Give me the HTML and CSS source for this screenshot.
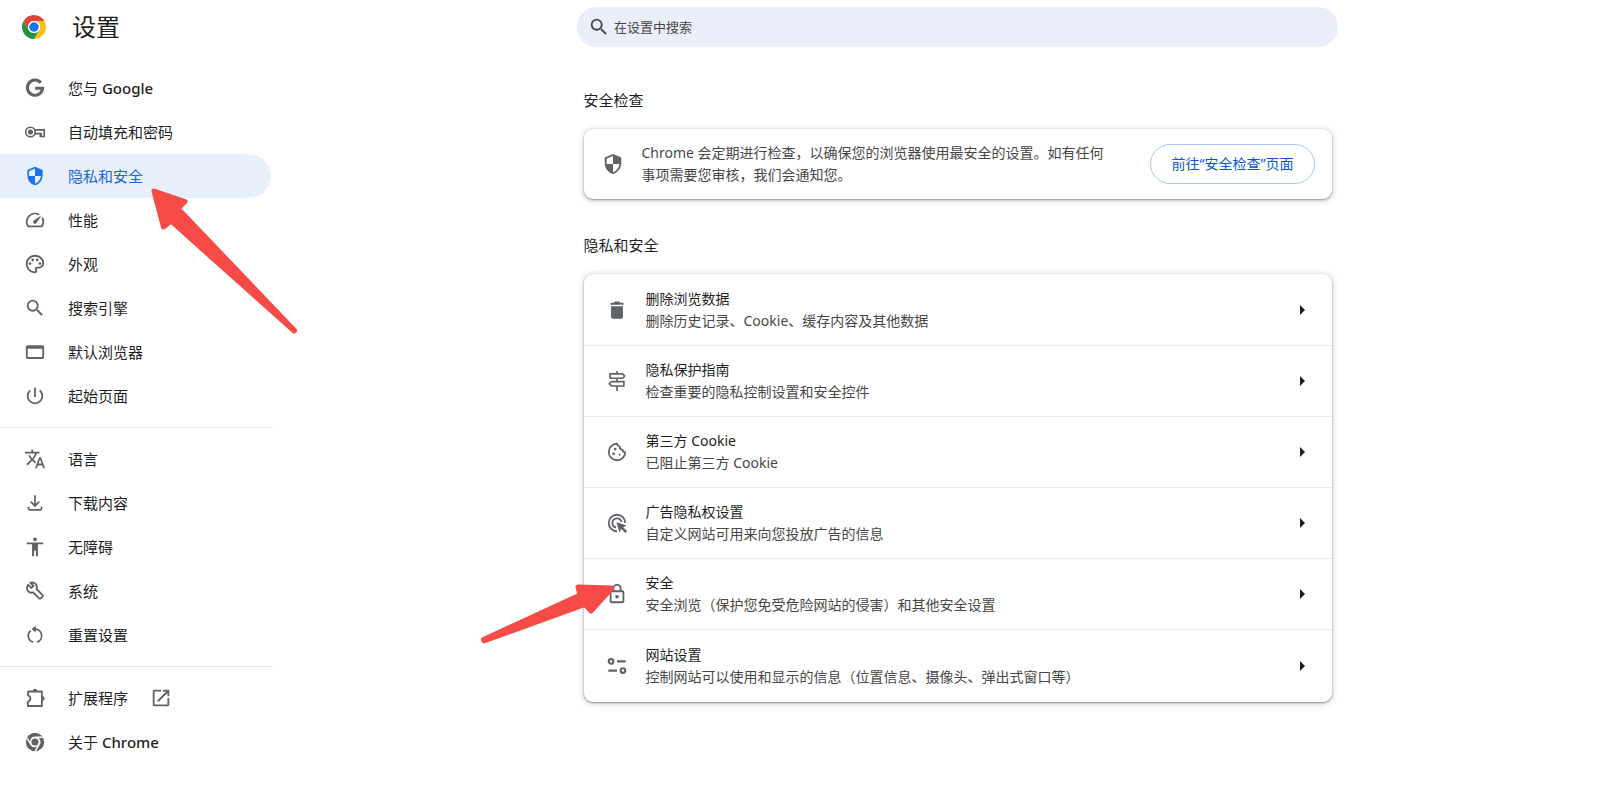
FILE: index.html
```html
<!DOCTYPE html>
<html lang="zh-CN">
<head>
<meta charset="utf-8">
<meta name="viewport" content="width=device-width, initial-scale=1">
<title>设置</title>
<link rel="stylesheet" href="styles.css">
</head>
<body>
<div class="page">
  <aside class="sidebar">
    <div class="brand">
      <svg class="brand-logo" viewBox="0 0 48 48" aria-hidden="true">
        <path fill="#db4437" d="M3.22 12A24 24 0 0 1 44.78 12H24A12 12 0 0 0 13.61 30Z"/>
        <path fill="#fbc116" d="M44.78 12A24 24 0 0 1 24 48L34.39 30A12 12 0 0 0 24 12Z"/>
        <path fill="#229342" d="M24 48A24 24 0 0 1 3.22 12L13.61 30A12 12 0 0 0 34.39 30Z"/>
        <circle cx="24" cy="24" r="12" fill="#fff"/>
        <circle cx="24" cy="24" r="9.5" fill="#1a73e8"/>
      </svg>
      <h1 class="brand-title">设置</h1>
    </div>
    <nav class="menu" aria-label="设置">
      <a class="menu-item" href="#people">
        <svg class="icon" viewBox="0 0 24 24" fill="none" stroke="currentColor" stroke-width="3.4"><path d="M18.3 6.2A8.3 8.3 0 1 0 20.3 12.2H12.2"/></svg>
        <span>您与 <span class="latin">Google</span></span>
      </a>
      <a class="menu-item" href="#autofill">
        <svg class="icon" viewBox="0 0 24 24" fill="none" stroke="currentColor" stroke-width="1.8"><circle cx="7" cy="12" r="5.2"/><circle cx="7" cy="12" r="2.8" fill="currentColor" stroke="none"/><path d="M11.6 9.7H22v7.2h-4.2v-3.2H12"/><path d="M18.8 13.2v3"/></svg>
        <span>自动填充和密码</span>
      </a>
      <a class="menu-item menu-item-active" href="#privacy" aria-current="page">
        <svg class="icon" viewBox="-1 -1 26 26"><path d="M12 1L3 5v6c0 5.55 3.84 10.74 9 12 5.16-1.26 9-6.45 9-12V5l-9-4zm0 10.99h7c-.53 4.12-3.28 7.79-7 8.94V12H5V6.3l7-3.11v8.8z"/></svg>
        <span>隐私和安全</span>
      </a>
      <a class="menu-item" href="#performance">
        <svg class="icon" viewBox="0 0 24 24"><path d="M20.38 8.57l-1.23 1.85a8 8 0 0 1-.22 7.58H5.07A8 8 0 0 1 15.58 6.85l1.85-1.23A10 10 0 0 0 3.35 19a2 2 0 0 0 1.72 1h13.85a2 2 0 0 0 1.74-1 10 10 0 0 0-.27-10.44zM10.59 15.41a2 2 0 0 0 2.83 0l5.66-8.49-8.49 5.66a2 2 0 0 0 0 2.83z"/></svg>
        <span>性能</span>
      </a>
      <a class="menu-item" href="#appearance">
        <svg class="icon" viewBox="0 0 24 24"><path d="M12 22C6.49 22 2 17.51 2 12S6.49 2 12 2s10 4.04 10 9c0 3.31-2.69 6-6 6h-1.77c-.28 0-.5.22-.5.5 0 .12.05.23.13.33.41.47.64 1.06.64 1.67A2.5 2.5 0 0 1 12 22zm0-18c-4.41 0-8 3.59-8 8s3.59 8 8 8c.28 0 .5-.22.5-.5a.54.54 0 0 0-.14-.35c-.41-.46-.63-1.05-.63-1.65a2.5 2.5 0 0 1 2.5-2.5H16c2.21 0 4-1.79 4-4 0-3.86-3.59-7-8-7z"/><circle cx="6.5" cy="11.5" r="1.5"/><circle cx="9.5" cy="7.5" r="1.5"/><circle cx="14.5" cy="7.5" r="1.5"/><circle cx="17.5" cy="11.5" r="1.5"/></svg>
        <span>外观</span>
      </a>
      <a class="menu-item" href="#search">
        <svg class="icon" viewBox="0 0 24 24"><path d="M15.5 14h-.79l-.28-.27A6.471 6.471 0 0 0 16 9.5 6.5 6.5 0 1 0 9.5 16c1.61 0 3.09-.59 4.23-1.57l.27.28v.79l5 4.99L20.49 19l-4.99-5zm-6 0C7.01 14 5 11.99 5 9.5S7.01 5 9.5 5 14 7.01 14 9.5 11.99 14 9.5 14z"/></svg>
        <span>搜索引擎</span>
      </a>
      <a class="menu-item" href="#default-browser">
        <svg class="icon" viewBox="0 0 24 24"><path d="M4 4.5h16a2 2 0 0 1 2 2v11a2 2 0 0 1-2 2H4a2 2 0 0 1-2-2v-11a2 2 0 0 1 2-2zM4 8.5v9h16v-9z" fill-rule="evenodd"/></svg>
        <span>默认浏览器</span>
      </a>
      <a class="menu-item" href="#on-startup">
        <svg class="icon" viewBox="0 0 24 24"><path d="M13 3h-2v10h2V3zm4.83 2.17l-1.42 1.42A6.92 6.92 0 0 1 19 12c0 3.87-3.13 7-7 7s-7-3.13-7-7c0-2.19 1.01-4.14 2.58-5.42L6.17 5.17A8.93 8.93 0 0 0 3 12a9 9 0 0 0 18 0c0-2.74-1.23-5.18-3.17-6.83z"/></svg>
        <span>起始页面</span>
      </a>
      <hr class="menu-line">
      <a class="menu-item" href="#languages">
        <svg class="icon" viewBox="0 0 24 24"><path d="M12.87 15.07l-2.54-2.51.03-.03c1.74-1.94 2.98-4.17 3.71-6.53H17V4h-7V2H8v2H1v1.99h11.17C11.5 7.92 10.44 9.75 9 11.35 8.07 10.32 7.3 9.19 6.69 8h-2c.73 1.63 1.73 3.17 2.98 4.56l-5.09 5.02L4 19l5-5 3.11 3.11.76-2.04zM18.5 10h-2L12 22h2l1.12-3h4.75L21 22h2l-4.5-12zm-2.62 7l1.62-4.33L19.12 17h-3.24z"/></svg>
        <span>语言</span>
      </a>
      <a class="menu-item" href="#downloads">
        <svg class="icon" viewBox="0 0 24 24" fill="none" stroke="currentColor" stroke-width="1.9"><path d="M12 3.500v11.500M7.400 10.600L12 15.200l4.600-4.600M4.900 16v2.200q0 1.400 1.400 1.400h11.400q1.400 0 1.400-1.400V16"/></svg>
        <span>下载内容</span>
      </a>
      <a class="menu-item" href="#accessibility">
        <svg class="icon" viewBox="0 0 24 24"><path d="M12 1.500a2.100 2.100 0 1 1 0 4.200 2.100 2.100 0 0 1 0-4.200zM21 9h-5.800v13.200h-2.200V16h-2v6.200H8.800V9H3V7h18z"/></svg>
        <span>无障碍</span>
      </a>
      <a class="menu-item" href="#system">
        <svg class="icon" viewBox="0 0 24 24" fill="none" stroke="currentColor" stroke-width="2" stroke-linejoin="round"><path d="M4.500 5.300l3.400 3.400 2.400-2.200-3.400-3.400c2-.8 4.200-.2 5.600 1.200 1.500 1.500 1.900 3.600 1.200 5.500l6.500 6.600c.5.500.5 1.200 0 1.700l-1.900 1.900c-.5.500-1.200.5-1.700 0l-6.600-6.500c-1.900.7-3.900.300-5.300-1.100-1.700-1.700-2.100-4.200-.2-7.100z"/></svg>
        <span>系统</span>
      </a>
      <a class="menu-item" href="#reset">
        <svg class="icon" viewBox="0 0 24 24" fill="none" stroke="currentColor" stroke-width="1.900"><path d="M11 5.500h1.500a7.300 7.300 0 0 1 1.800 14.200M10 19.800A7.300 7.300 0 0 1 7.300 7.200"/><path d="M12.800 1.800v7.400L8.200 5.500z" fill="currentColor" stroke="none"/></svg>
        <span>重置设置</span>
      </a>
      <hr class="menu-line">
      <a class="menu-item" href="#extensions">
        <svg class="icon" viewBox="0 0 24 24"><path d="M4.500 4.900H19.500V20.700H4.200v-4.500q2.800-1.200 2.800-3.600T4.200 9z" fill="none" stroke="currentColor" stroke-width="2" stroke-linejoin="round"/><path d="M9.500 4.500a2.500 2.500 0 0 1 5 0zM20 10a2.500 2.500 0 0 1 0 5z"/></svg>
        <span>扩展程序</span>
        <svg class="icon" viewBox="0 0 24 24"><path d="M19 19H5V5h7V3H5a2 2 0 0 0-2 2v14a2 2 0 0 0 2 2h14c1.100 0 2-.9 2-2v-7h-2v7zM14 3v2h3.590l-9.830 9.830 1.410 1.410L19 6.410V10h2V3h-7z"/></svg>
      </a>
      <a class="menu-item" href="#about">
        <svg class="icon" viewBox="-3 -3 54 54"><circle cx="24" cy="24" r="22.500"/><path d="M43 12.500H24A11.500 11.500 0 0 0 14 18.200M4.500 14.500L14 30A11.500 11.500 0 0 0 24 35.500M24.500 46.500L34 30A11.500 11.500 0 0 0 30 14" fill="none" stroke="#fff" stroke-width="3.600"/><circle cx="24" cy="24" r="10.500" fill="currentColor" stroke="#fff" stroke-width="3.600"/></svg>
        <span>关于 <span class="latin">Chrome</span></span>
      </a>
    </nav>
    <svg class="pointer pointer-menu" viewBox="0 0 150 150" aria-hidden="true"><path d="M5 5L36 15.500 29 22.500 145.500 144.500 145 145 22 35 14.500 41Z"/></svg>
  </aside>

  <main class="main">
    <label class="search">
      <svg class="icon search-icon" viewBox="0 0 24 24"><path d="M15.500 14h-.79l-.28-.27A6.471 6.471 0 0 0 16 9.500 6.500 6.500 0 1 0 9.500 16c1.610 0 3.090-.59 4.230-1.570l.27.28v.79l5 4.990L20.490 19l-4.990-5zm-6 0C7.010 14 5 11.990 5 9.500S7.010 5 9.500 5 14 7.010 14 9.500 11.990 14 9.500 14z"/></svg>
      <input class="search-input" type="search" placeholder="在设置中搜索" aria-label="在设置中搜索">
    </label>

    <section class="section">
      <h2 class="section-title">安全检查</h2>
      <div class="card check">
        <svg class="icon" viewBox="0 0 24 24"><path d="M12 1L3 5v6c0 5.550 3.840 10.740 9 12 5.160-1.260 9-6.450 9-12V5l-9-4zm0 10.990h7c-.53 4.120-3.280 7.790-7 8.940V12H5V6.300l7-3.110v8.800z"/></svg>
        <p class="check-text">Chrome 会定期进行检查，以确保您的浏览器使用最安全的设置。如有任何事项需要您审核，我们会通知您。</p>
        <button class="check-button" type="button">前往“安全检查”页面</button>
      </div>
    </section>

    <section class="section">
      <h2 class="section-title">隐私和安全</h2>
      <div class="card list">
        <a class="row" href="#clear">
          <svg class="icon" viewBox="0 0 24 24"><path d="M5.500 8h13v11.500a2 2 0 0 1-2 2h-9a2 2 0 0 1-2-2z"/><path d="M15.500 4l-1-1.300h-5L8.500 4H5v2.200h14V4z"/></svg>
          <span class="row-text"><span class="row-title">删除浏览数据</span><span class="row-sub">删除历史记录、Cookie、缓存内容及其他数据</span></span>
          <svg class="arrow" viewBox="0 0 5 10"><path d="M0 0l5 5-5 5z"/></svg>
        </a>
        <a class="row" href="#guide">
          <svg class="icon" viewBox="0 0 24 24" fill="none" stroke="currentColor" stroke-width="1.800"><path d="M12 1v3M12 9v3.500M12 17.500v5.500M4.500 4.200h13.500l2.400 2.400L18 9H4.500zM19.500 12.600H6l-2.400 2.400L6 17.400h13.500z"/></svg>
          <span class="row-text"><span class="row-title">隐私保护指南</span><span class="row-sub">检查重要的隐私控制设置和安全控件</span></span>
          <svg class="arrow" viewBox="0 0 5 10"><path d="M0 0l5 5-5 5z"/></svg>
        </a>
        <a class="row" href="#cookies">
          <svg class="icon" viewBox="0 0 24 24"><path d="M12 3A9 9 0 1 0 21 12.500q-2.600 0-3-3-3-.2-3-3.300Q12.500 5.500 12 3z" fill="none" stroke="currentColor" stroke-width="2" stroke-linejoin="round"/><circle cx="10" cy="8.800" r="1.500"/><circle cx="8.200" cy="14" r="1.500"/><circle cx="14.800" cy="15" r="1.100"/></svg>
          <span class="row-text"><span class="row-title">第三方 Cookie</span><span class="row-sub">已阻止第三方 Cookie</span></span>
          <svg class="arrow" viewBox="0 0 5 10"><path d="M0 0l5 5-5 5z"/></svg>
        </a>
        <a class="row" href="#ads">
          <svg class="icon" viewBox="0 0 24 24"><path d="M12 21a9 9 0 1 1 9-9M11 16.900A5 5 0 1 1 16.900 11" fill="none" stroke="currentColor" stroke-width="2"/><path d="M11.300 11.300l11.200 3.500-3.800 1.700 4.400 4.400-2 2-4.400-4.400-1.900 3.900z"/></svg>
          <span class="row-text"><span class="row-title">广告隐私权设置</span><span class="row-sub">自定义网站可用来向您投放广告的信息</span></span>
          <svg class="arrow" viewBox="0 0 5 10"><path d="M0 0l5 5-5 5z"/></svg>
        </a>
        <a class="row" href="#security">
          <svg class="icon" viewBox="0 0 24 24"><path d="M18 8h-1V6A5 5 0 0 0 7 6v2H6a2 2 0 0 0-2 2v10c0 1.100.9 2 2 2h12a2 2 0 0 0 2-2V10a2 2 0 0 0-2-2zM9 6a3 3 0 0 1 6 0v2H9zm9 14H6V10h12zm-6-3a2 2 0 1 0 0-4 2 2 0 0 0 0 4z"/></svg>
          <span class="row-text"><span class="row-title">安全</span><span class="row-sub">安全浏览（保护您免受危险网站的侵害）和其他安全设置</span></span>
          <svg class="arrow" viewBox="0 0 5 10"><path d="M0 0l5 5-5 5z"/></svg>
        </a>
        <a class="row" href="#site-settings">
          <svg class="icon" viewBox="0 0 24 24" fill="none" stroke="currentColor" stroke-width="2.300"><circle cx="5.500" cy="7" r="2.500"/><circle cx="18.500" cy="17" r="2.500"/><path d="M12 7h9.500M2.500 17H12"/></svg>
          <span class="row-text"><span class="row-title">网站设置</span><span class="row-sub">控制网站可以使用和显示的信息（位置信息、摄像头、弹出式窗口等）</span></span>
          <svg class="arrow" viewBox="0 0 5 10"><path d="M0 0l5 5-5 5z"/></svg>
        </a>
        <svg class="pointer pointer-row" viewBox="0 0 140 66" aria-hidden="true"><path d="M4.500 58.500L101 14 99 6 133 7 112 30 106 23.500 5 60Z"/></svg>
      </div>
    </section>
  </main>
</div>
</body>
</html>
```

FILE: styles.css
```css
* {
  box-sizing: border-box;
}

body {
  margin: 0;
  background: #fff;
  color: #1f1f1f;
  font-family: "Noto Sans", "Noto Sans CJK SC", sans-serif;
  font-size: 14px;
  line-height: 22px;
}

a {
  color: inherit;
  text-decoration: none;
}

.page {
  display: flex;
  min-height: 100vh;
}

.icon {
  width: 22px;
  height: 22px;
  flex: none;
  color: #5f6368;
  fill: currentColor;
}

.icon[fill="none"] {
  fill: none;
}

/* Sidebar */
.sidebar {
  position: relative;
  flex: none;
  width: 310px;
}

.brand {
  display: flex;
  align-items: center;
  gap: 26px;
  height: 54px;
  padding-left: 22px;
}

.brand-logo {
  width: 24px;
  height: 24px;
}

.brand-title {
  margin: 0;
  font-size: 24px;
  line-height: 32px;
  font-weight: 400;
}

.menu {
  width: 273px;
  padding-top: 12px;
}

.menu-item {
  display: flex;
  align-items: center;
  gap: 22px;
  height: 44px;
  margin-right: 2px;
  padding-left: 24px;
  border-radius: 0 22px 22px 0;
  font-size: 15px;
}

.menu-item-active {
  background: #e8effd;
  color: #1967d2;
}

.menu-item-active .icon {
  color: #1a73e8;
}

.latin {
  font-weight: 500;
}

.menu-line {
  height: 1px;
  margin: 9px 0;
  border: 0;
  background: #e6e6e6;
}

/* Main column */
.main {
  flex: 1;
  display: flex;
  flex-direction: column;
  align-items: center;
  padding: 7px 8px 40px 6px;
}

.search {
  display: flex;
  align-items: center;
  gap: 4px;
  width: 100%;
  max-width: 761px;
  height: 40px;
  margin-bottom: 42px;
  padding: 0 11px;
  border-radius: 20px;
  background: #ebeef8;
}

.search-icon {
  color: #474747;
}

.search-input {
  flex: 1;
  min-width: 0;
  padding: 0;
  border: 0;
  outline: 0;
  background: transparent;
  font: inherit;
  font-size: 13px;
}

.search-input::placeholder {
  color: #474747;
  opacity: 1;
}

.section {
  width: 100%;
  max-width: 748px;
  margin-bottom: 35px;
}

.section-title {
  margin: 0 0 18px;
  font-size: 15px;
  line-height: 22px;
  font-weight: 400;
}

.card {
  position: relative;
  border-radius: 9px;
  background: #fff;
  box-shadow: 0 1px 2px rgba(60, 64, 67, 0.5), 0 1px 6px 1px rgba(60, 64, 67, 0.2);
}

.check {
  display: flex;
  align-items: center;
  gap: 18px;
  min-height: 70px;
  padding: 12px 17px 12px 18px;
}

.check-text {
  flex: 1;
  margin: 0;
  padding-right: 24px;
  color: #474747;
}

.check-button {
  height: 40px;
  padding: 0 20px;
  border: 1px solid #a8c7fa;
  border-radius: 20px;
  background: #fff;
  color: #0b57d0;
  font: inherit;
}

.list {
  padding: 1px 0;
}

.row {
  display: flex;
  align-items: center;
  gap: 18px;
  min-height: 71px;
  padding: 0 27px 0 22px;
  border-bottom: 1px solid #ebebeb;
}

.row:last-of-type {
  border-bottom: 0;
}

.row-text {
  flex: 1;
  display: flex;
  flex-direction: column;
}

.row-sub {
  color: #474747;
}

.arrow {
  width: 5px;
  height: 10px;
  fill: #1f1f1f;
}

/* Red pointers lying over the page */
.pointer {
  position: absolute;
  fill: #f74b47;
  stroke: #f74b47;
  stroke-width: 5;
  stroke-linejoin: round;
  pointer-events: none;
}

.pointer-menu {
  top: 186px;
  left: 149px;
  width: 150px;
  height: 150px;
}

.pointer-row {
  top: 307px;
  left: -105px;
  width: 140px;
  height: 66px;
}
```
